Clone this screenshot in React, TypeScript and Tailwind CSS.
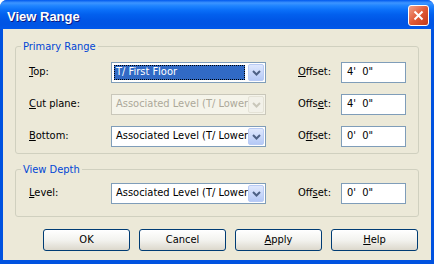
import type { ReactNode } from "react";
import clsx from "clsx";

function Mn({ children }: { children: ReactNode }) {
  return <span className="underline decoration-1 underline-offset-[1px]">{children}</span>;
}

function Chevron({ disabled }: { disabled?: boolean }) {
  return (
    <svg width="9" height="6" viewBox="0 0 9 6">
      <path
        d="M1 1 L4.5 4.5 L8 1"
        fill="none"
        stroke={disabled ? "#c9c7ba" : "#4d6185"}
        strokeWidth="2"
      />
    </svg>
  );
}

function Combo({ value, selected, disabled }: { value: string; selected?: boolean; disabled?: boolean }) {
  return (
    <div
      className={clsx(
        "flex h-[21px] w-[155px] items-stretch border p-px",
        disabled ? "border-[#c9c7ba] bg-[#f5f4ea]" : "border-[#7f9db9] bg-white"
      )}
    >
      <div className="flex min-w-0 flex-1 items-stretch overflow-hidden p-px pr-[3px]">
        <span
          className={clsx(
            "flex flex-1 items-center whitespace-nowrap pl-[2px]",
            selected && "bg-[#316ac5] text-white outline-1 outline-dotted outline-offset-[-1px] outline-black",
            disabled && "text-[#aca899]"
          )}
        >
          {value}
        </span>
      </div>
      <div
        className={clsx(
          "flex w-[16px] items-center justify-center rounded-[2px] border",
          disabled
            ? "border-[#e4e2d6] bg-[#f2f1e9]"
            : "border-[#b9cbf5] bg-gradient-to-b from-[#dfe8fd] to-[#b5c9f6]"
        )}
      >
        <Chevron disabled={disabled} />
      </div>
    </div>
  );
}

function TextBox({ value }: { value: string }) {
  return (
    <div className="flex h-[21px] w-[65px] items-center border border-[#7f9db9] bg-white pl-[5px] whitespace-pre">
      {value}
    </div>
  );
}

function Row({
  label,
  offset,
  value,
  offsetValue,
  selected,
  disabled,
}: {
  label: ReactNode;
  offset: ReactNode;
  value: string;
  offsetValue: string;
  selected?: boolean;
  disabled?: boolean;
}) {
  return (
    <div className="flex items-center">
      <div className="w-[82px]">{label}</div>
      <Combo value={value} selected={selected} disabled={disabled} />
      <div className="ml-[32px] w-[43px]">{offset}</div>
      <TextBox value={offsetValue} />
    </div>
  );
}

function Group({ title, className, children }: { title: string; className?: string; children: ReactNode }) {
  return (
    <fieldset className="rounded-[3px] border border-[#d0d0bf] px-0">
      <legend className="ml-[5px] px-[2px] leading-[13px] text-[#0046d5]">{title}</legend>
      <div className={clsx("flex flex-col pl-[13px]", className)}>{children}</div>
    </fieldset>
  );
}

function Button({ children }: { children: ReactNode }) {
  return (
    <button className="flex h-[22px] w-[87px] items-center justify-center rounded-[3px] border border-[#003c74] bg-gradient-to-b from-[#ffffff] via-[#f3f3ef] to-[#dcd8cc]">
      {children}
    </button>
  );
}

export default function App() {
  const ft = "4'\u00a0\u00a00\"";
  const zt = "0'\u00a0\u00a00\"";
  return (
    <div className="flex h-[264px] w-[434px] flex-col overflow-hidden rounded-t-[7px] bg-[#0052e0] font-['DejaVu_Sans_Condensed','Liberation_Sans',sans-serif] text-[11px] text-black">
      <div className="flex h-[29px] items-start justify-between bg-[linear-gradient(to_bottom,#0058ee_0%,#3d95ff_10%,#1f84ff_20%,#0a6ff8_35%,#0260ee_50%,#0056e6_70%,#0054e3_85%,#0058ec_100%)] pl-[7px] pr-[5px]">
        <span className="mt-[7px] font-['Liberation_Sans',sans-serif] text-[13px] font-bold text-white [text-shadow:1px_1px_#0a1883]">
          View Range
        </span>
        <div className="mt-[5px] flex h-[21px] w-[21px] items-center justify-center rounded-[3px] border border-white bg-gradient-to-br from-[#f0a088] via-[#e05a36] to-[#c2391a]">
          <svg width="11" height="11" viewBox="0 0 11 11">
            <path d="M1.5 1.5 L9.5 9.5 M9.5 1.5 L1.5 9.5" stroke="white" strokeWidth="2" />
          </svg>
        </div>
      </div>
      <div className="mx-[3px] mb-[4px] flex flex-1 flex-col bg-[#ece9d8] px-[12px] pt-[11px]">
        <Group title="Primary Range" className="gap-[11px] pb-[6px] pt-[9px]">
          <Row
            label={<><Mn>T</Mn>op:</>}
            offset={<><Mn>O</Mn>ffset:</>}
            value="T/ First Floor"
            offsetValue={ft}
            selected
          />
          <Row
            label={<><Mn>C</Mn>ut plane:</>}
            offset={<>Offs<Mn>e</Mn>t:</>}
            value="Associated Level (T/ Lower"
            offsetValue={ft}
            disabled
          />
          <Row
            label={<><Mn>B</Mn>ottom:</>}
            offset={<>O<Mn>f</Mn>fset:</>}
            value="Associated Level (T/ Lower"
            offsetValue={zt}
          />
        </Group>
        <div className="mt-[9px]">
          <Group title="View Depth" className="pb-[12px] pt-[7px]">
            <Row
              label={<><Mn>L</Mn>evel:</>}
              offset={<>Off<Mn>s</Mn>et:</>}
              value="Associated Level (T/ Lower"
              offsetValue={zt}
            />
          </Group>
        </div>
        <div className="mt-[12px] flex gap-[9px] pl-[28px]">
          <Button>OK</Button>
          <Button>Cancel</Button>
          <Button><Mn>A</Mn>pply</Button>
          <Button><Mn>H</Mn>elp</Button>
        </div>
      </div>
    </div>
  );
}
